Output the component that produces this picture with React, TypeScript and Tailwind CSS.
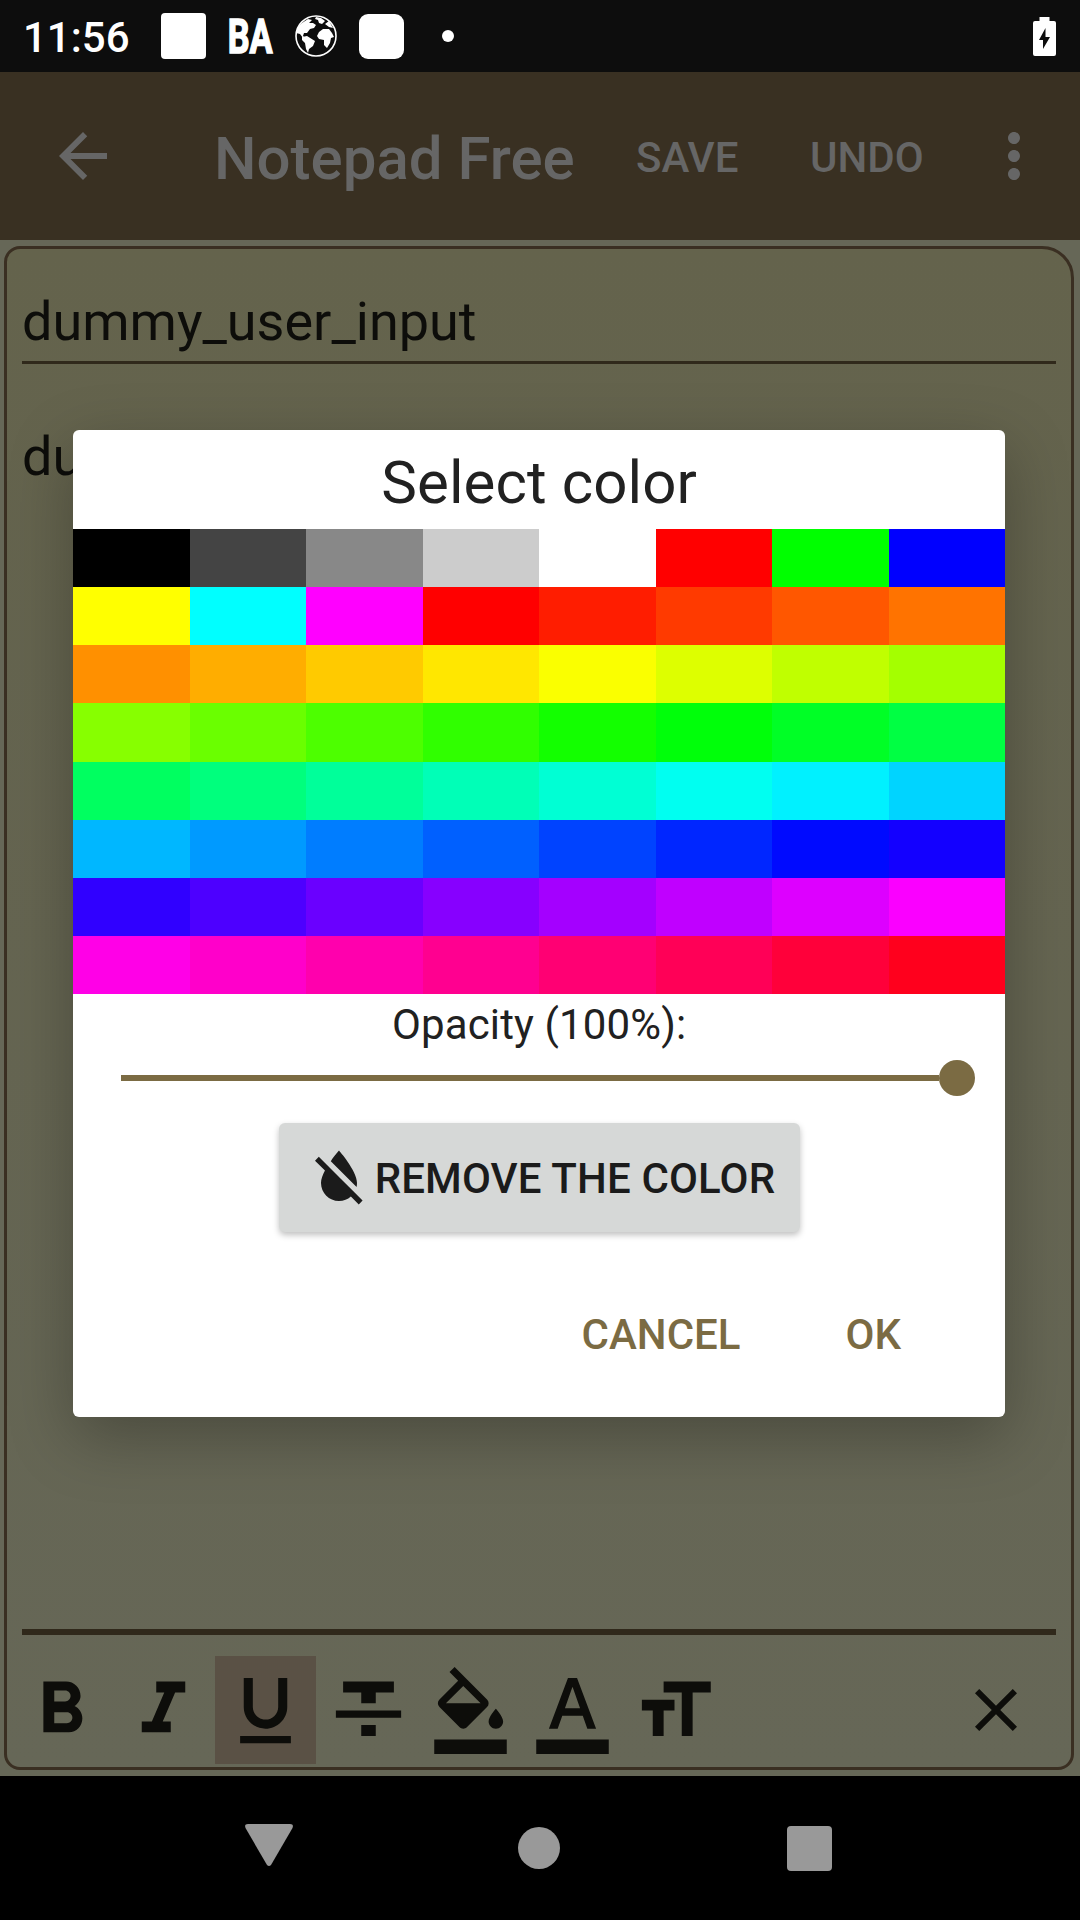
import {
  MdArrowBack,
  MdClose,
  MdFormatBold,
  MdFormatColorFill,
  MdFormatColorReset,
  MdFormatColorText,
  MdFormatItalic,
  MdFormatSize,
  MdFormatStrikethrough,
  MdFormatUnderlined,
  MdMoreVert,
} from "react-icons/md";

const HUES = 53;

const palette: string[] = [
  "#000000", "#444444", "#888888", "#cccccc", "#ffffff", "#ff0000", "#00ff00", "#0000ff",
  "#ffff00", "#00ffff", "#ff00ff",
  ...Array.from({ length: HUES }, (_, i) => `hsl(${(i * 360) / HUES} 100% 50%)`),
];

function StatusBar() {
  return (
    <header className="flex h-[72px] items-center bg-[#0d0d0d] pl-[23px] pr-6 text-white">
      <span className="w-[138px] pt-1 text-[42px] leading-none font-medium">11:56</span>
      <span className="h-[46px] w-[45px] rounded-[4px] bg-white" />
      <span className="ml-[21px] flex h-[46px] w-[46px] items-center justify-center">
        <span className="inline-block scale-x-[.7] text-[49px] leading-none font-bold [-webkit-text-stroke:1.5px_white]">BA</span>
      </span>
      <svg viewBox="0 0 42 42" className="ml-[22px] h-[42px] w-[42px]">
        <circle cx="21" cy="21" r="20" fill="none" stroke="white" strokeWidth="1.6" />
        <path fill="white" d="M7 8 13 4l4 1-3 3 4 0 3 2-2 3-4 1-3 4-3 0-1 3 4 3-4-1-3-4-4-1Q2 12 7 8ZM21 2l5 1 4 3-3 3-3-1-1-3-3-1ZM7 22l5-1 8 5-2 5-4 3-1 4-2-4-1-6-3-3ZM24 17l4-3 6 0 3 4 2 4-3 1-1 5-3 5-3-3 0-5-5-1-2-3ZM30 9l4-3 4 7-4-1Z" />
      </svg>
      <span className="ml-[22px] h-[45px] w-[45px] rounded-[9px] bg-white" />
      <span className="ml-[38px] h-3 w-3 rounded-full bg-white" />
      <svg viewBox="0 0 23 39" className="ml-auto h-[39px] w-[23px]">
        <path fill="white" fillRule="evenodd" d="M6.5 0h10v4H21a2 2 0 0 1 2 2v31a2 2 0 0 1-2 2H2a2 2 0 0 1-2-2V6a2 2 0 0 1 2-2h4.500ZM12.500 11 6 23h4v9l7-12h-4.500Z" />
      </svg>
    </header>
  );
}

function AppBar() {
  return (
    <div className="flex h-[168px] items-center bg-[#393022] pl-[46.500px] text-[#666666]">
      <MdArrowBack className="size-[72px]" />
      <h1 className="ml-[95.500px] w-[422px] pt-1.5 text-[60px] leading-none font-medium whitespace-nowrap">Notepad Free</h1>
      <span className="w-[174px] pt-1 text-[42px] leading-none font-medium">SAVE</span>
      <span className="w-[168px] pt-1 text-[42px] leading-none font-medium">UNDO</span>
      <MdMoreVert className="size-[72px] shrink-0" />
    </div>
  );
}

const tools = [
  { name: "Bold", Icon: MdFormatBold },
  { name: "Italic", Icon: MdFormatItalic },
  { name: "Underline", Icon: MdFormatUnderlined, active: true },
  { name: "Strikethrough", Icon: MdFormatStrikethrough },
  { name: "Fill", Icon: MdFormatColorFill },
  { name: "Text color", Icon: MdFormatColorText },
  { name: "Size", Icon: MdFormatSize },
];

function Editor() {
  return (
    <main className="h-[1536px] bg-[#666757] pt-1.5 pl-1">
      <section className="flex h-[1524px] w-[1070px] flex-col rounded-[16px] rounded-tr-[32px] border-[3px] border-[#3a2f22] bg-linear-to-b from-[#64634c] to-[#666757] px-[15px] text-[54px] text-[#0d0d0a]">
        <p className="h-[115px] border-b-[3px] border-[#30291b] pt-[41px] leading-[64px]">dummy_user_input</p>
        <p className="flex-1 pt-[61px] leading-[64px]">du</p>
        <div className="h-1.5 bg-[#30291b]" />
        <div className="-mx-3 mt-[21px] mb-[3px] flex h-[108px]">
          {tools.map(({ name, Icon, active }) => (
            <button
              key={name}
              aria-label={name}
              className={`mr-px flex w-[101.300px] items-center justify-center ${active ? "bg-[#5a5145]" : ""}`}
            >
              <Icon className="ml-px size-[87px]" />
            </button>
          ))}
          <button aria-label="Close" className="mr-9 ml-auto">
            <MdClose className="size-[72px]" />
          </button>
        </div>
      </section>
    </main>
  );
}

function ColorDialog() {
  return (
    <div
      role="dialog"
      className="absolute top-[430px] left-[73.300px] flex h-[987px] w-[931.700px] flex-col items-center rounded-[6px] bg-white text-[#212121] shadow-[0_20px_64px_rgba(0,0,0,0.27)]"
    >
      <h2 className="h-[99px] pt-[18px] text-[60px] leading-[70px] tracking-[0.1px]">Select color</h2>
      <div className="grid h-[465px] w-full grid-cols-8 grid-rows-8">
        {palette.map((color, i) => (
          <span key={i} style={{ backgroundColor: color }} />
        ))}
      </div>
      <p className="pt-[6px] text-[42px] leading-[50px] tracking-[0.12px]">Opacity (100%):</p>
      <div className="mt-[10px] flex h-9 w-full items-center pr-[30px] pl-12">
        <span className="h-1.5 flex-1 bg-[#7b6b43]" />
        <span className="size-9 rounded-full bg-[#7b6b43]" />
      </div>
      <button className="mt-[27px] flex h-[109px] w-[521px] items-center rounded-[6px] bg-[#d6d8d7] pl-[24px] text-[42px] font-medium text-[#1b1b1b] shadow-[0_3px_6px_rgba(0,0,0,0.25)]">
        <MdFormatColorReset className="-mt-0.5 size-[72px]" />
        <span className="pt-0.5 leading-none tracking-[0.14px] whitespace-nowrap">REMOVE THE COLOR</span>
      </button>
      <div className="mt-[78px] flex w-full justify-end gap-[105px] pr-[104px] text-[42px] leading-[50px] font-medium text-[#7b6b43]">
        <span>CANCEL</span>
        <span>OK</span>
      </div>
    </div>
  );
}

function NavigationBar() {
  return (
    <nav className="flex h-36 items-center bg-black pl-[245px] text-[#999999]">
      <svg viewBox="0 0 48 42" className="-mt-1.5 h-[42px] w-12">
        <path fill="currentColor" d="M3 0h42q4 0 2.500 4L26 41q-2 2-4 0L.5 4Q-1 0 3 0Z" />
      </svg>
      <span className="ml-[225px] size-[42px] rounded-full bg-current" />
      <span className="ml-[227px] size-[45px] rounded-[4px] bg-current" />
    </nav>
  );
}

export default function App() {
  return (
    <div className="relative h-[1920px] w-[1080px] overflow-hidden bg-black font-[Roboto,sans-serif]">
      <StatusBar />
      <AppBar />
      <Editor />
      <NavigationBar />
      <ColorDialog />
    </div>
  );
}
